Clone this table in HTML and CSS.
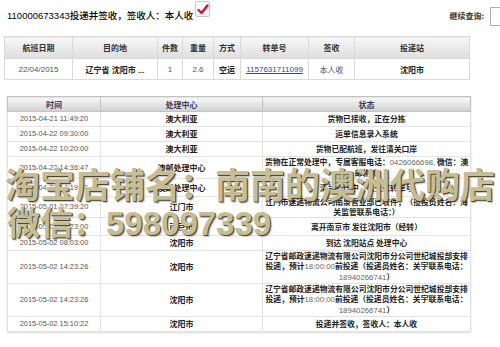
FILE: index.html
```html
<!DOCTYPE html>
<html lang="zh-CN">
<head>
<meta charset="utf-8">
<title>投递查询</title>
<link rel="stylesheet" href="styles.css">
</head>
<body>
<div class="top">
  <span class="title">110000673343投递并签收，签收人：本人收</span>
  <span class="chk"><svg width="12" height="11" viewBox="0 0 12 11"><path d="M1.5 6 L4.5 9 L10.5 1.5" fill="none" stroke="#d3122f" stroke-width="2.4" stroke-linecap="round" stroke-linejoin="round"/></svg></span>
  <span class="label">继续查询:</span>
  <span class="inp"></span>
</div>

<table class="t1">
  <colgroup>
    <col class="w68"><col class="w85"><col class="w25"><col class="w31"><col class="w27"><col class="w68"><col class="w46"><col class="w115">
  </colgroup>
  <tr>
    <th>航班日期</th><th>目的地</th><th>件数</th><th>重量</th><th>方式</th><th>转单号</th><th>签收</th><th>投递站</th>
  </tr>
  <tr>
    <td>22/04/2015</td>
    <td class="b">辽宁省 沈阳市 ...</td>
    <td>1</td>
    <td>2.6</td>
    <td class="b">空运</td>
    <td><span class="lnk">1157631711099</span></td>
    <td>本人收</td>
    <td class="b">沈阳市</td>
  </tr>
</table>

<table class="t2">
  <colgroup><col class="w93"><col class="w162"><col class="w208"></colgroup>
  <tr><th>时间</th><th>处理中心</th><th>状态</th></tr>
  <tr class="s"><td class="tm">2015-04-21 11:49:20</td><td class="ct">澳大利亚</td><td class="st">货物已接收，正在分拣</td></tr>
  <tr class="s"><td class="tm">2015-04-22 09:30:00</td><td class="ct">澳大利亚</td><td class="st">运单信息录入系统</td></tr>
  <tr class="s"><td class="tm">2015-04-22 10:20:00</td><td class="ct">澳大利亚</td><td class="st">货物已配航班，发往清关口岸</td></tr>
  <tr class="d"><td class="tm">2015-04-22 14:36:47</td><td class="ct">澳邮处理中心</td><td class="st">货物在正常处理中，专属客服电话：<span class="num">0426066698,</span> 微信：澳<br>邮物流</td></tr>
  <tr class="m"><td class="tm">2015-04-29 14:19:00</td><td class="ct">澳邮处理中心</td><td class="st">清关处理中，已生成转单号</td></tr>
  <tr class="d"><td class="tm">2015-05-01 07:39:20</td><td class="ct">江门市</td><td class="st">江门市速递物流公司南泉营业部已收件，（揽投员姓名：海<br>关监管联系电话：）</td></tr>
  <tr class="m"><td class="tm">2015-05-01 18:23:00</td><td class="ct">南京市</td><td class="st">离开南京市 发往沈阳市（经转）</td></tr>
  <tr class="s"><td class="tm">2015-05-02 08:03:00</td><td class="ct">沈阳市</td><td class="st">到达 沈阳站点 处理中心</td></tr>
  <tr class="x"><td class="tm">2015-05-02 14:23:26</td><td class="ct">沈阳市</td><td class="st">辽宁省邮政速递物流有限公司沈阳市分公司世纪城投部安排<br>投递，预计<span class="num">18:00:00</span>前投递（投递员姓名：关宇联系电话：<br><span class="num">18940266741</span>）</td></tr>
  <tr class="y"><td class="tm">2015-05-02 14:23:26</td><td class="ct">沈阳市</td><td class="st">辽宁省邮政速递物流有限公司沈阳市分公司世纪城投部安排<br>投递，预计<span class="num">18:00:00</span>前投递（投递员姓名：关宇联系电话：<br><span class="num">18940266741</span>）</td></tr>
  <tr class="s"><td class="tm">2015-05-02 15:10:22</td><td class="ct">沈阳市</td><td class="st">投递并签收，签收人：本人收</td></tr>
</table>

<div class="wm">
  <div class="wm1">淘宝店铺名：南南的澳洲代购店</div>
  <div class="wm2">微信：<span class="dg">598097339</span></div>
</div>
</body>
</html>
```

FILE: styles.css
```css
* { box-sizing: border-box; }
html, body { margin: 0; padding: 0; background: #fff; }
body {
  width: 500px;
  height: 347px;
  overflow: hidden;
  position: relative;
  font-family: "Liberation Sans", "Noto Sans CJK SC", sans-serif;
  color: #333;
}

/* top line */
.top {
  display: flex;
  align-items: center;
  height: 30px;
  padding-left: 7px;
}
.title {
  font-size: 9.5px;
  color: #000;
  font-weight: 500;
  font-family: "Liberation Sans", "Noto Sans CJK SC", sans-serif;
}
.chk {
  align-self: flex-start;
  margin: 1px 0 0 2px;
  width: 15px;
  height: 16px;
  border: 1px solid #c9c9c9;
  border-radius: 2px;
  background: #fff;
  box-shadow: inset 0 -3px 3px #efefef;
  display: flex;
  align-items: center;
  justify-content: center;
}
.label {
  margin-left: auto;
  margin-right: 6px;
  font-size: 8px;
  font-weight: bold;
  color: #333;
  font-family: "Noto Sans CJK SC", sans-serif;
}
.inp {
  width: 10px;
  height: 19px;
  margin-top: 2px;
  border: 1px solid #b0b0b0;
  border-right: none;
  background: #fff;
}

/* first table */
.t1 {
  margin: 6px 0 0 4px;
  width: 465px;
  border-collapse: collapse;
  table-layout: fixed;
}
.t1 th, .t1 td {
  border: 1px solid #dadada;
  text-align: center;
  padding: 0;
  font-size: 8px;
  white-space: nowrap;
  overflow: hidden;
}
.t1 th {
  height: 22px;
  background: linear-gradient(#f7f7f7, #dedede);
  font-weight: bold;
  color: #333;
  font-family: "Noto Sans CJK SC", sans-serif;
}
.t1 td {
  height: 21px;
  color: #555;
}
.t1 .b { font-weight: bold; color: #222; }
.lnk { color: #3a40a8; text-decoration: underline; }

.w68 { width: 68px; }
.w85 { width: 85px; }
.w25 { width: 25px; }
.w31 { width: 31px; }
.w27 { width: 27px; }
.w46 { width: 46px; }
.w115 { width: 115px; }
.w93 { width: 93px; }
.w162 { width: 162px; }
.w208 { width: 208px; }

/* second table */
.t2 {
  margin: 16px 0 0 7px;
  width: 463px;
  border-collapse: collapse;
  table-layout: fixed;
  border: 1px solid #c2c2c2;
  box-shadow: 0 1px 2px rgba(0,0,0,0.15);
}
.t2 th {
  height: 15px;
  padding: 0;
  background: linear-gradient(#f9f9f9, #d0d0d0);
  font-size: 8px;
  font-weight: bold;
  color: #2f3f63;
  border: 1px solid #c2c2c2;
  font-family: "Noto Sans CJK SC", sans-serif;
}
.t2 td {
  border: 1px solid #e3e3e3;
  text-align: center;
  padding: 0 2px;
  line-height: 10px;
  font-size: 8px;
}
.t2 .tm { font-size: 7.4px; color: #555; }
.t2 .ct { font-weight: bold; color: #222; font-family: "Noto Sans CJK SC", sans-serif; }
.t2 .st {
  font-size: 7.8px;
  font-weight: bold;
  color: #222;
  white-space: nowrap;
  font-family: "Noto Sans CJK SC", sans-serif;
}
.t2 .num { font-weight: normal; color: #666; font-family: "Liberation Sans", sans-serif; }
.t2 tr.s td { height: 15px; }
.t2 tr.m td { height: 18px; }
.t2 tr.d td { height: 21px; }
.t2 tr.x td { height: 33px; }
.t2 tr.y td { height: 30px; }

/* watermark overlay */
.wm {
  position: absolute;
  left: 5px;
  top: 164px;
  color: #c6bd93;
  text-shadow: 1px 1px 0 #4e4a36, 2px 2px 1px rgba(0,0,0,0.25), -1px -1px 0 rgba(255,255,255,0.6);
  pointer-events: none;
}
.wm1 {
  font-size: 35px;
  line-height: 38px;
  font-weight: bold;
  white-space: nowrap;
  font-family: "Noto Sans CJK SC", sans-serif;
}
.wm2 {
  padding-left: 2px;
  font-size: 33px;
  line-height: 38px;
  font-weight: bold;
  white-space: nowrap;
  font-family: "Noto Sans CJK SC", sans-serif;
}
.wm2 .dg { font-family: "Liberation Sans", sans-serif; }
```
